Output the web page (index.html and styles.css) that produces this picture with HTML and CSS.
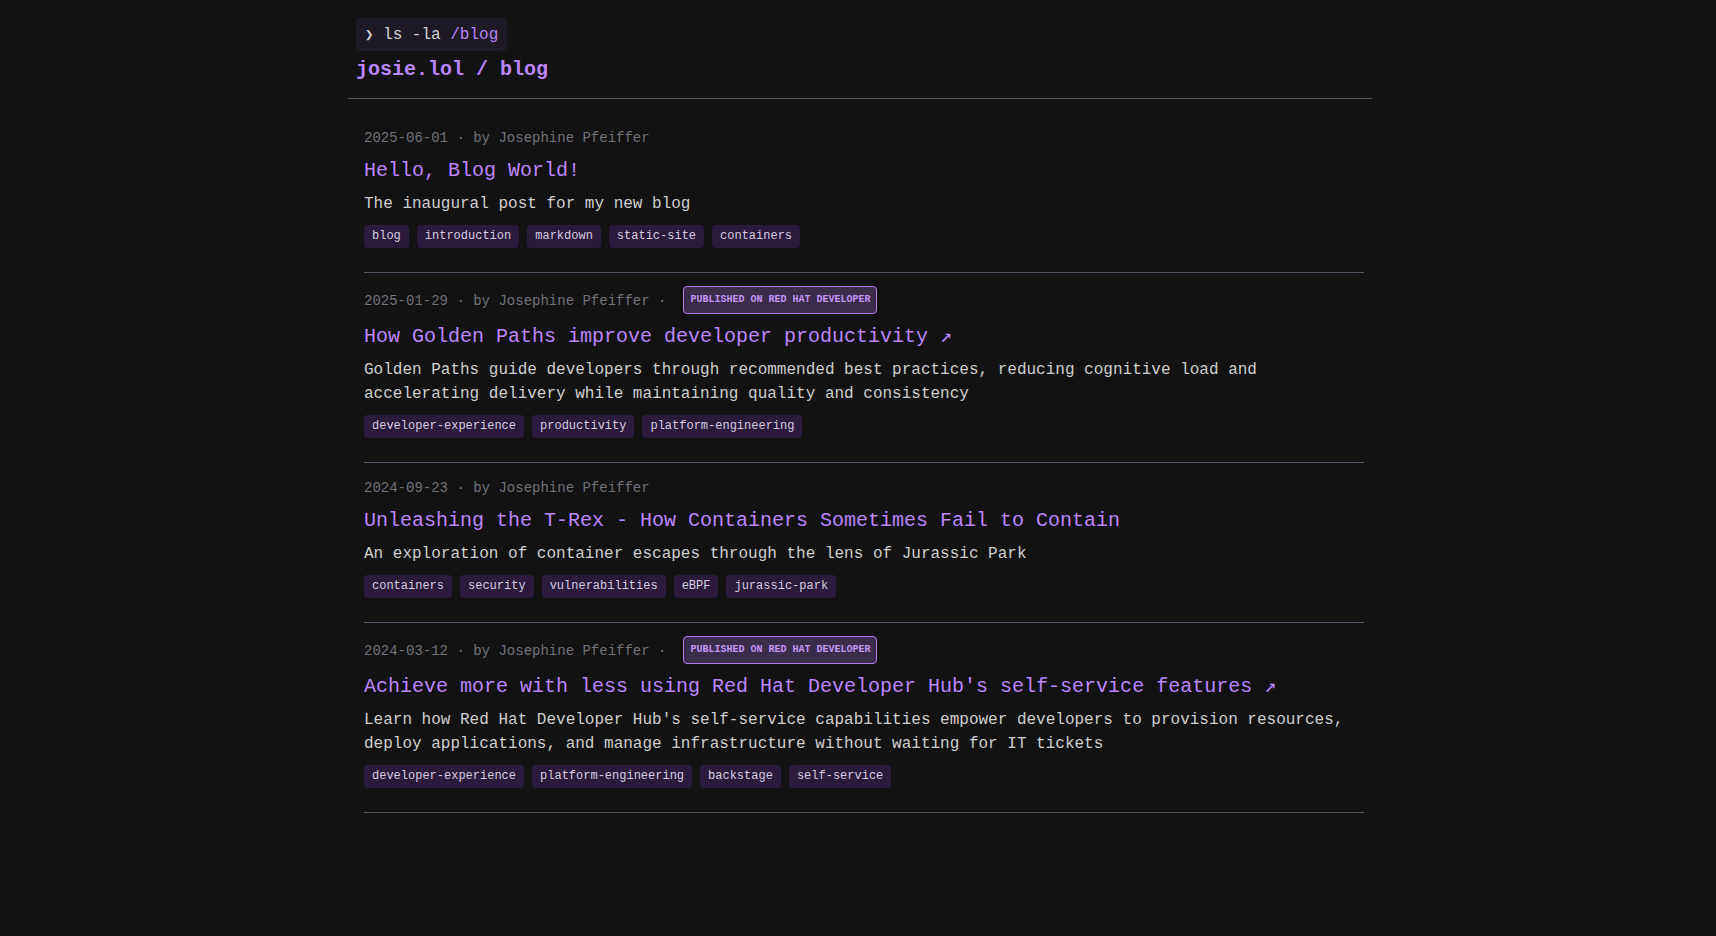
FILE: index.html
```html
<!DOCTYPE html>
<html lang="en">
<head>
  <meta charset="UTF-8">
  <title>josie.lol / blog</title>
  <link rel="stylesheet" href="styles.css">
</head>
<body>

  <div class="container">
    <header class="site-header">
      <div class="prompt"><span class="caret">❯</span> ls -la <span class="path">/blog</span></div>
      <h1>josie.lol / blog</h1>
    </header>

    <main class="posts">

      <!-- Post 1 -->
      <article class="post">
        <div class="meta">2025-06-01 · by Josephine Pfeiffer</div>
        <h2><a href="#">Hello, Blog World!</a></h2>
        <p class="desc">The inaugural post for my new blog</p>
        <div class="tags">
          <span class="tag">blog</span>
          <span class="tag">introduction</span>
          <span class="tag">markdown</span>
          <span class="tag">static-site</span>
          <span class="tag">containers</span>
        </div>
      </article>

      <!-- Post 2 -->
      <article class="post">
        <div class="meta">2025-01-29 · by Josephine Pfeiffer ·<span class="badge">Published on Red Hat Developer</span></div>
        <h2><a href="#">How Golden Paths improve developer productivity ↗</a></h2>
        <p class="desc">Golden Paths guide developers through recommended best practices, reducing cognitive load and accelerating delivery while maintaining quality and consistency</p>
        <div class="tags">
          <span class="tag">developer-experience</span>
          <span class="tag">productivity</span>
          <span class="tag">platform-engineering</span>
        </div>
      </article>

      <!-- Post 3 -->
      <article class="post">
        <div class="meta">2024-09-23 · by Josephine Pfeiffer</div>
        <h2><a href="#">Unleashing the T-Rex - How Containers Sometimes Fail to Contain</a></h2>
        <p class="desc">An exploration of container escapes through the lens of Jurassic Park</p>
        <div class="tags">
          <span class="tag">containers</span>
          <span class="tag">security</span>
          <span class="tag">vulnerabilities</span>
          <span class="tag">eBPF</span>
          <span class="tag">jurassic-park</span>
        </div>
      </article>

      <!-- Post 4 -->
      <article class="post">
        <div class="meta">2024-03-12 · by Josephine Pfeiffer ·<span class="badge">Published on Red Hat Developer</span></div>
        <h2><a href="#">Achieve more with less using Red Hat Developer Hub's self-service features ↗</a></h2>
        <p class="desc">Learn how Red Hat Developer Hub's self-service capabilities empower developers to provision resources, deploy applications, and manage infrastructure without waiting for IT tickets</p>
        <div class="tags">
          <span class="tag">developer-experience</span>
          <span class="tag">platform-engineering</span>
          <span class="tag">backstage</span>
          <span class="tag">self-service</span>
        </div>
      </article>

    </main>
  </div>

</body>
</html>
```

FILE: styles.css
```css
body {
  font-family: 'Liberation Mono', 'DejaVu Sans Mono', monospace;
  background: #121212;
  color: #cfcfcf;
  margin: 0;
  padding: 0;
}

.container {
  width: 1024px;
  margin: 0 auto;
  padding-left: 4px;
}

.site-header {
  padding: 18px 8px 14px;
  border-bottom: 1px solid #4b5563;
}

.prompt {
  display: inline-block;
  background: #1e1a25;
  color: #d4d4d4;
  font-size: 16px;
  line-height: 32px;
  padding: 0 9px;
  border-radius: 4px;
}

.prompt .caret {
  font-family: 'DejaVu Sans Mono', monospace;
  font-size: 14px;
  font-weight: 700;
}

.prompt .path {
  color: #bb86fc;
}

h1 {
  font-size: 20px;
  line-height: 28px;
  font-weight: 700;
  color: #bb86fc;
  margin: 5px 0 0;
}

.posts {
  padding: 14px 8px 0 16px;
}

.post {
  padding: 13px 0 24px;
  border-bottom: 1px solid #4b5563;
}

.meta {
  display: flex;
  align-items: center;
  font-size: 14px;
  line-height: 24px;
  color: #71717a;
  white-space: pre;
}

.badge {
  margin: 0 0 2px 17px;
  padding: 6px;
  border: 1px solid #b57ef2;
  border-radius: 4px;
  background: #3a2c4b;
  color: #c497f5;
  font-size: 10px;
  line-height: 14px;
  font-weight: 700;
  text-transform: uppercase;
}

.post h2 {
  font-size: 20px;
  line-height: 28px;
  font-weight: 400;
  margin: 7px 0 7px;
}

.post h2 a {
  color: #bb86fc;
  text-decoration: none;
}

.desc {
  font-size: 16px;
  line-height: 24px;
  margin: 0 0 9px;
  color: #cfcfcf;
}

.tags {
  display: flex;
  flex-wrap: wrap;
  gap: 8px;
}

.tag {
  background: #2a1a3c;
  color: #d6cde2;
  font-size: 12px;
  line-height: 15px;
  padding: 4px 8px;
  border-radius: 4px;
}
```
